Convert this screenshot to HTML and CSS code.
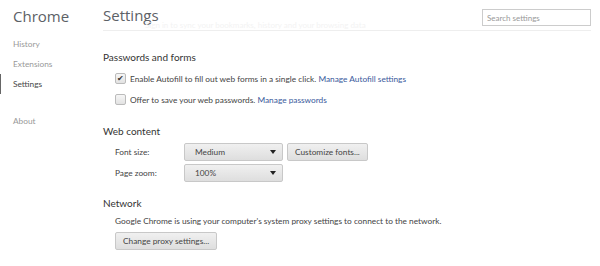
FILE: index.html
```html
<!DOCTYPE html>
<html lang="en">
<head>
    <meta charset="UTF-8">
    <title>Settings</title>
    <link rel="stylesheet" href="styles.css">
</head>
<body>
    <div class="page">
        <!-- Left navigation -->
        <div class="sidebar">
            <h1 class="brand">Chrome</h1>
            <ul class="nav">
                <li>History</li>
                <li>Extensions</li>
                <li class="selected">Settings</li>
                <li class="about">About</li>
            </ul>
        </div>

        <div class="main">
            <div class="main-header">
                <h1 class="page-title">Settings</h1>
                <span class="ghost">Sign in to sync your bookmarks, history and your browsing data</span>
                <input type="text" class="search" placeholder="Search settings">
            </div>

            <div class="section">
                <h2>Passwords and forms</h2>
                <div class="row check-row">
                    <span class="checkbox checked">&#10004;</span>
                    <span>Enable Autofill to fill out web forms in a single click. <a href="#">Manage Autofill settings</a></span>
                </div>
                <div class="row check-row">
                    <span class="checkbox"></span>
                    <span>Offer to save your web passwords. <a href="#">Manage passwords</a></span>
                </div>
            </div>

            <div class="section">
                <h2>Web content</h2>
                <div class="row field-row">
                    <label>Font size:</label>
                    <div class="select">Medium<span class="arrow"></span></div>
                    <button class="btn">Customize fonts...</button>
                </div>
                <div class="row field-row">
                    <label>Page zoom:</label>
                    <div class="select">100%<span class="arrow"></span></div>
                </div>
            </div>

            <div class="section">
                <h2>Network</h2>
                <div class="row text-row">Google Chrome is using your computer's system proxy settings to connect to the network.</div>
                <div class="row button-row">
                    <button class="btn">Change proxy settings...</button>
                </div>
            </div>
        </div>
    </div>
</body>
</html>
```

FILE: styles.css
```css
body {
    margin: 0;
    font-family: 'Lato', sans-serif;
    font-size: 8.3px;
    color: #333;
    background-color: #fff;
}

.page {
    display: flex;
    min-height: 266px;
}

.sidebar {
    width: 103px;
    flex-shrink: 0;
}

.brand {
    font-family: 'Open Sans', sans-serif;
    font-size: 15px;
    font-weight: normal;
    color: #5c6166;
    margin: 0;
    padding: 6px 0 0 13px;
    height: 24px;
}

.nav {
    list-style: none;
    margin: 0;
    padding: 0;
}

.nav li {
    color: #999;
    height: 20px;
    line-height: 20px;
    padding-left: 12px;
    border-left: 1px solid transparent;
}

.nav li:first-child {
    margin-top: 4px;
}

.nav li.selected {
    color: #464646;
    border-left-color: #666;
}

.nav li.about {
    margin-top: 17px;
}

.main {
    flex: 1;
    padding-right: 9px;
}

.main-header {
    position: relative;
    display: flex;
    align-items: center;
    justify-content: space-between;
    height: 30px;
    border-bottom: 1px solid #eee;
}

.page-title {
    font-family: 'Open Sans', sans-serif;
    font-size: 15px;
    font-weight: normal;
    color: #5c6166;
    margin: 0;
}

/* faded content scrolled under the header */
.ghost {
    position: absolute;
    left: 42px;
    top: 20px;
    color: #f3f3f3;
    font-size: 8px;
}

.search {
    width: 109px;
    height: 17px;
    box-sizing: border-box;
    border: 1px solid #ccc;
    padding: 0 4px;
    font-family: inherit;
    font-size: 8px;
    margin-top: 5px;
}

.search::placeholder {
    color: #999;
}

.section h2 {
    font-size: 10px;
    font-weight: normal;
    line-height: 14px;
    color: #333;
    margin: 0 0 4px 0;
}

.section {
    margin-top: 13px;
}

.section:nth-child(2) {
    margin-top: 19px;
}

.section:nth-child(3) {
    margin-top: 14px;
}

.row {
    padding-left: 12px;
    color: #444;
}

.check-row {
    display: flex;
    align-items: center;
    height: 21px;
}

.checkbox {
    width: 9px;
    height: 9px;
    border: 1px solid #bbb;
    border-radius: 2px;
    background: linear-gradient(#f6f6f6, #e2e2e2);
    margin-right: 4px;
    font-size: 8px;
    line-height: 9px;
    text-align: center;
    color: #333;
}

a {
    color: #3a5a9c;
    text-decoration: none;
}

.field-row {
    display: flex;
    align-items: center;
    height: 21px;
}

.field-row label {
    width: 69px;
}

.field-row:first-of-type {
    margin-top: -1px;
}

.select {
    position: relative;
    width: 99px;
    height: 18px;
    box-sizing: border-box;
    line-height: 16px;
    padding-left: 10px;
    border: 1px solid #c8c8c8;
    border-radius: 2px;
    background: linear-gradient(#f0f0f0, #dedede);
    margin-right: 4px;
}

.arrow {
    position: absolute;
    right: 6px;
    top: 6px;
    border-left: 3.5px solid transparent;
    border-right: 3.5px solid transparent;
    border-top: 4px solid #222;
}

.text-row {
    line-height: 14px;
    margin-top: 1px;
}

.button-row {
    margin-top: 4px;
}

.btn {
    height: 18px;
    box-sizing: border-box;
    padding: 0 7px;
    font-family: inherit;
    font-size: 8.3px;
    color: #444;
    border: 1px solid #c8c8c8;
    border-radius: 2px;
    background: linear-gradient(#f0f0f0, #dedede);
}
```
